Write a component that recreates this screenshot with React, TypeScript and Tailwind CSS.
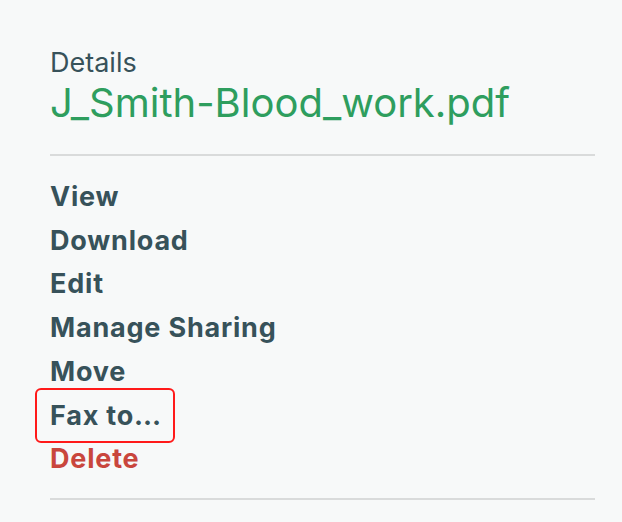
export default function App() {
  const actions = ["View", "Download", "Edit", "Manage Sharing", "Move"];

  return (
    <div className="min-h-[522px] w-[622px] bg-[#f7f9f9] pl-[50px] pr-[27px] pt-[44px] font-['Inter',sans-serif]">
      {/* Header */}
      <div className="pb-[29px]">
        <div className="text-[27px] leading-[37px] text-[#37525a]">Details</div>
        <div className="text-[40px] leading-[44px] text-[#2e9e5e]">J_Smith-Blood_work.pdf</div>
      </div>
      <div className="h-[2px] bg-[#d9dbdb]" />

      {/* Actions */}
      <ul className="pt-[19px] pb-[17px] text-[27px] font-bold leading-[43.7px] tracking-[0.8px] text-[#37525a]">
        {actions.map((a) => (
          <li key={a}>{a}</li>
        ))}
        <li className="relative">
          Fax to…
          <span className="pointer-events-none absolute -left-[15px] top-[-6px] h-[55px] w-[140px] rounded-[6px] border-2 border-[#ff1a1a]" />
        </li>
        <li className="text-[#c9463d]">Delete</li>
      </ul>
      <div className="h-[2px] bg-[#d9dbdb]" />
    </div>
  );
}
